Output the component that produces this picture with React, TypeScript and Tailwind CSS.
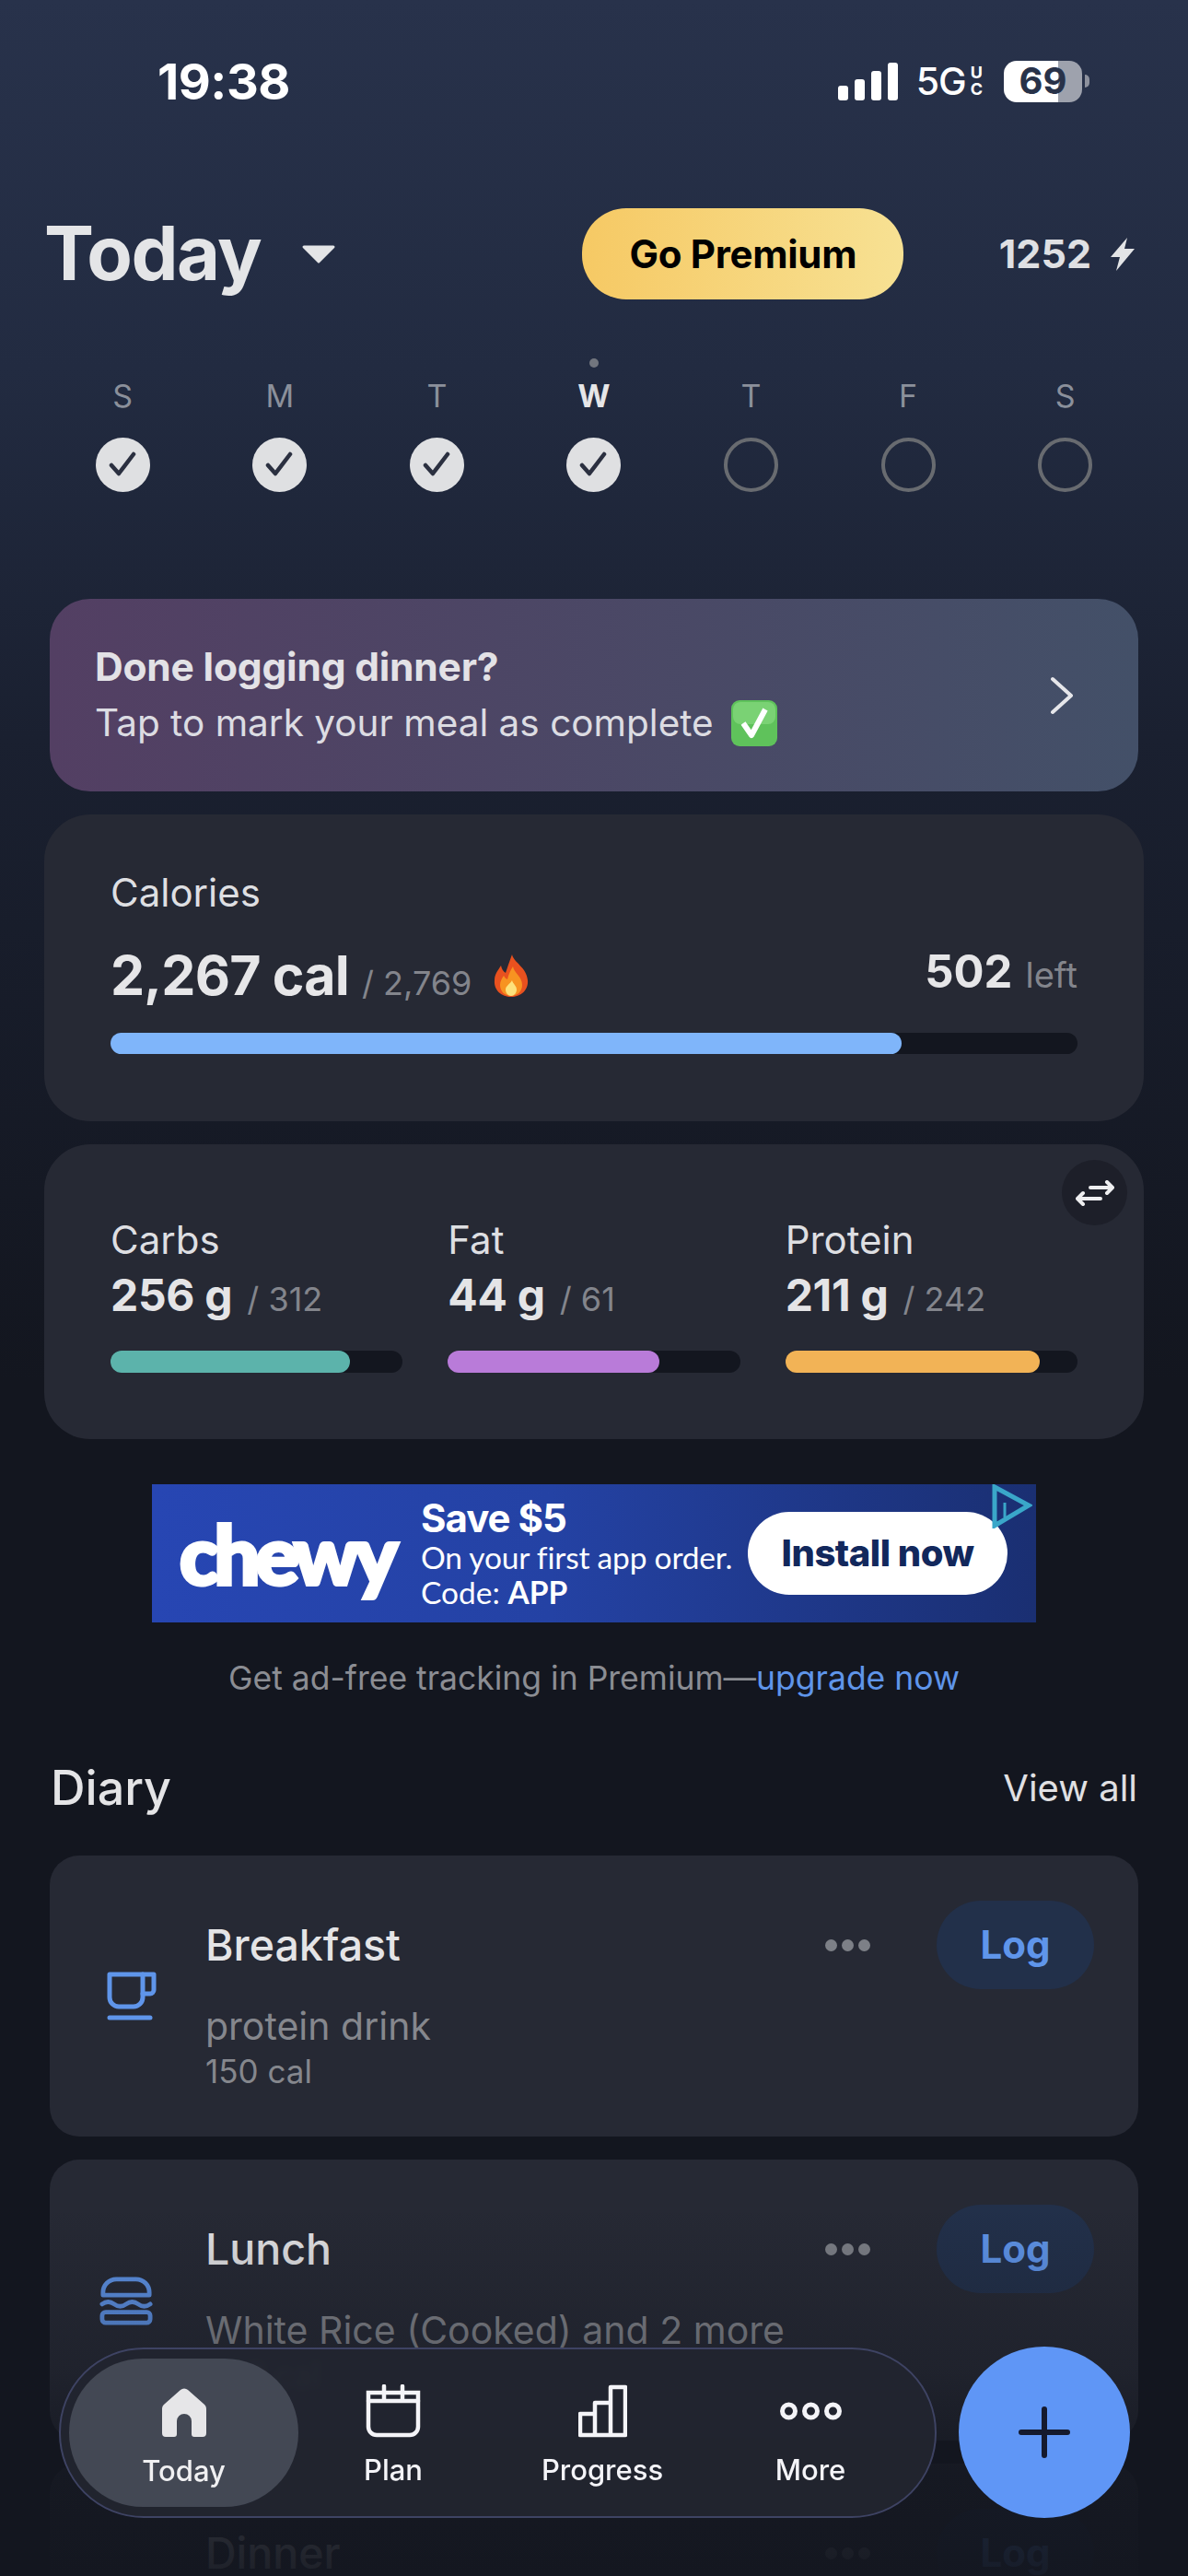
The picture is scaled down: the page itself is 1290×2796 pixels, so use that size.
const days = [
  { label: "S", done: true },
  { label: "M", done: true },
  { label: "T", done: true },
  { label: "W", done: true, today: true },
  { label: "T", done: false },
  { label: "F", done: false },
  { label: "S", done: false },
]

const macros = [
  { name: "Carbs", value: "256 g", goal: "/ 312", fill: "w-[260px]", color: "bg-[#5cb3ab]" },
  { name: "Fat", value: "44 g", goal: "/ 61", fill: "w-[230px]", color: "bg-[#b97bd9]" },
  { name: "Protein", value: "211 g", goal: "/ 242", fill: "w-[276px]", color: "bg-[#f2b356]" },
]

function DayCircle({ done }: { done: boolean }) {
  return (
    <svg width="59" height="59" viewBox="0 0 59 59" fill="none">
      {done ? (
        <>
          <circle cx="29.5" cy="29.5" r="29.5" fill="#dfe0e2" />
          <path d="M17 30l8 9 16-21" stroke="#2b3040" strokeWidth="4.500" strokeLinecap="round" strokeLinejoin="round" />
        </>
      ) : (
        <circle cx="29.5" cy="29.5" r="27.5" stroke="#686b70" strokeWidth="4" />
      )}
    </svg>
  )
}

function CheckEmoji() {
  return (
    <svg width="52" height="52" viewBox="0 0 52 52" fill="none" className="ml-[18px]">
      <rect x="1" y="1" width="50" height="50" rx="9" fill="#5fc25b" />
      <rect x="3" y="3" width="46" height="24" rx="8" fill="#7ad274" />
      <path d="M14 26l9 13 15-28" stroke="#fff" strokeWidth="6" strokeLinejoin="round" />
    </svg>
  )
}

function FlameEmoji() {
  return (
    <svg width="38" height="46" viewBox="0 0 38 46" className="ml-[24px] self-center">
      <path d="M20 0c2 9 16 14 17 28 1 11-8 18-18 18S0 39 1 28c0-7 4-11 7-16 1 4 2 6 5 8 2-6 4-12 7-20z" fill="#e8511f" />
      <path d="M21 13c1 7 10 11 10 20 0 7-5 12-12 12S7 40 7 33c0-4 2-7 4-10 1 2 2 3 4 4 1-5 3-9 6-14z" fill="#f79321" />
      <path d="M20 28c1 4 5 6 5 10 0 4-3 7-6 7s-6-3-6-7c0-4 5-6 7-10z" fill="#fde27c" />
    </svg>
  )
}

function CupIcon() {
  return (
    <svg width="54" height="54" viewBox="0 0 54 54" fill="none" stroke="#5f95ea" strokeWidth="5" strokeLinecap="round" strokeLinejoin="round">
      <path d="M3 3h36v25a10 10 0 0 1-10 10H13A10 10 0 0 1 3 28z" />
      <path d="M39 3h12v17a4 4 0 0 1-4 4h-8" />
      <path d="M3 50h44" />
    </svg>
  )
}

function BurgerIcon() {
  return (
    <svg width="60" height="54" viewBox="0 0 60 54" fill="none" stroke="#5f95ea" strokeWidth="5" strokeLinecap="round" strokeLinejoin="round" className="mr-[12px]">
      <path d="M4 21v-3A15 15 0 0 1 19 3h22a15 15 0 0 1 15 15v3z" />
      <path d="M3 31q6.750-5 13.500 0t13.500 0 13.500 0 13.500 0" />
      <rect x="3" y="40" width="54" height="12" rx="4" />
    </svg>
  )
}

function MealCard({
  title,
  desc,
  cal,
  icon,
}: {
  title: string
  desc?: string
  cal?: string
  icon: React.ReactNode
}) {
  return (
    <div className="mx-[54px] mb-[25px] flex h-[305px] shrink-0 items-center rounded-[32px] bg-[#262934] pl-[54px] pr-[48px]">
      <div className="flex w-[70px] justify-center">{icon}</div>
      <div className="ml-[45px] flex h-full flex-1 flex-col pt-[49px]">
        <div className="flex h-[96px] items-center">
          <span className="flex-1 text-[46.5px] font-medium leading-[48px] text-[#e4e4e6]">{title}</span>
          <div className="mr-[72px] flex gap-[5px]">
            <span className="h-[13px] w-[13px] rounded-full bg-[#7d8087]" />
            <span className="h-[13px] w-[13px] rounded-full bg-[#7d8087]" />
            <span className="h-[13px] w-[13px] rounded-full bg-[#7d8087]" />
          </div>
          <div className="flex h-[96px] w-[171px] items-center justify-center rounded-full bg-[#22304a] text-[42px] font-bold leading-[48px] text-[#5f95ea]">
            Log
          </div>
        </div>
        <div className="mt-[15px] text-[41px] leading-[50px] text-[#85878d]">{desc}</div>
        <div className="mt-[2px] text-[35px] leading-[44px] text-[#85878d]">{cal}</div>
      </div>
    </div>
  )
}

function BottomNav() {
  return (
    <div className="absolute bottom-[63px] left-[64px] right-[63px] z-20 flex items-center justify-between">
      <nav className="flex h-[185px] w-[953px] items-center rounded-[92px] border-2 border-[#3e4363] bg-[#22252f]/95 pl-[9px] backdrop-blur-[3px]">
        <div className="flex h-[161px] w-[249px] flex-col items-center rounded-[80px] bg-[#434854]">
          <svg width="50" height="54" viewBox="0 0 50 54" fill="#e6e6e8" className="mt-[32px]">
            <path d="M21 2a6 6 0 0 1 8 0l17 15a7 7 0 0 1 3 6v26a4 4 0 0 1-4 4h-9a3 3 0 0 1-3-3V36a8 8 0 0 0-16 0v14a3 3 0 0 1-3 3H5a4 4 0 0 1-4-4V23a7 7 0 0 1 3-6z" />
          </svg>
          <span className="mt-[16px] text-[31px] font-medium leading-[40px] text-[#f0f0f2]">Today</span>
        </div>
        <div className="flex w-[206px] flex-col items-center pt-[8px]">
          <svg width="60" height="58" viewBox="0 0 60 58" fill="none" stroke="#f4f4f8" strokeWidth="4.500" strokeLinecap="round">
            <path d="M3 9h54v37a9 9 0 0 1-9 9H12a9 9 0 0 1-9-9z" />
            <path d="M3 18h54" />
            <path d="M20 2v14M40 2v14" />
          </svg>
          <span className="mt-[15px] text-[31px] font-medium leading-[40px] text-[#f4f4f8]">Plan</span>
        </div>
        <div className="flex w-[248px] flex-col items-center pt-[8px]">
          <svg width="53" height="58" viewBox="0 0 53 58" fill="none" stroke="#f4f4f8" strokeWidth="4.500" strokeLinejoin="round">
            <path d="M35 3h16v52H35zM18 20h17v35H18zM2 32h16v23H2z" />
          </svg>
          <span className="mt-[15px] text-[31px] font-medium leading-[40px] text-[#f4f4f8]">Progress</span>
        </div>
        <div className="flex w-[204px] flex-col items-center pt-[8px]">
          <div className="flex h-[58px] items-center">
            <svg width="67" height="20" viewBox="0 0 67 20" fill="none" stroke="#f4f4f8" strokeWidth="5">
              <circle cx="9.500" cy="10" r="7" />
              <circle cx="33.500" cy="10" r="7" />
              <circle cx="57.500" cy="10" r="7" />
            </svg>
          </div>
          <span className="mt-[15px] text-[31px] font-medium leading-[40px] text-[#f4f4f8]">More</span>
        </div>
      </nav>
      <div className="flex h-[186px] w-[186px] items-center justify-center rounded-full bg-[#5f96f6]">
        <svg width="56" height="56" viewBox="0 0 56 56" fill="none" stroke="#151a2e" strokeWidth="6" strokeLinecap="round">
          <path d="M28 3v50M3 28h50" />
        </svg>
      </div>
    </div>
  )
}

export default function App() {
  return (
    <div className="relative flex h-[2796px] w-[1290px] flex-col overflow-hidden bg-[linear-gradient(180deg,#28324b_0px,#222b41_400px,#1a2030_800px,#13161f_1500px)] font-['Inter',sans-serif]">
      {/* status bar */}
      <div className="flex h-[176px] shrink-0 items-center justify-between pl-[171px] pr-[107px]">
        <span className="text-[54px] font-bold tracking-[-0.5px] text-white">19:38</span>
        <div className="flex items-center">
          <div className="flex h-[41px] items-end gap-[7px]">
            <span className="h-[16px] w-[11px] rounded-[3px] bg-white" />
            <span className="h-[23px] w-[11px] rounded-[3px] bg-white" />
            <span className="h-[32px] w-[11px] rounded-[3px] bg-white" />
            <span className="h-[41px] w-[11px] rounded-[3px] bg-white" />
          </div>
          <span className="ml-[20px] text-[41px] font-medium leading-none tracking-[-1px] text-white">5G</span>
          <div className="ml-[5px] flex flex-col items-center text-[18px] font-bold leading-[18px] text-white">
            <span>U</span>
            <span>C</span>
          </div>
          <div className="ml-[23px] flex h-[45px] w-[85px] items-center justify-center rounded-[14px] bg-[linear-gradient(90deg,#ffffff_69%,#9ea2ad_69%)] text-[40px] font-bold text-[#283249]">
            69
          </div>
          <span className="ml-[3px] h-[14px] w-[5px] rounded-r-full bg-[#8d919d]" />
        </div>
      </div>

      {/* header */}
      <div className="mt-[50px] flex h-[99px] shrink-0 items-center pl-[48px] pr-[58px]">
        <span className="text-[81px] font-bold tracking-[-1.500px] text-[#e4e5e7]">Today</span>
        <svg width="38" height="22" viewBox="0 0 38 22" className="ml-[44px]" fill="#e4e5e7" stroke="#e4e5e7" strokeWidth="3" strokeLinejoin="round">
          <path d="M3 3h32L19 19z" />
        </svg>
        <div className="ml-[267px] flex h-[99px] w-[349px] items-center justify-center rounded-[48px] bg-[linear-gradient(90deg,#f6c964,#f7e193)] text-[42px] font-bold tracking-[-0.3px] text-black">
          Go Premium
        </div>
        <span className="ml-auto text-[43px] font-bold text-[#dfe0e3]">1252</span>
        <svg width="26" height="36" viewBox="0 0 26 36" fill="#e3e4e6" className="ml-[21px]">
          <path d="M18 0L0 21h10L6 36l20-24H15z" />
        </svg>
      </div>

      {/* week strip */}
      <div className="mx-[48px] mt-[64px] grid shrink-0 grid-cols-7">
        {days.map((d, i) => (
          <div key={i} className="flex flex-col items-center">
            <span className={`h-[10px] w-[10px] rounded-full ${d.today ? "bg-[#72767e]" : ""}`} />
            <span className={`mt-[11px] text-[34px] leading-[40px] ${d.today ? "font-bold text-[#e6e6e8]" : "text-[#8b909b]"}`}>
              {d.label}
            </span>
            <div className="mt-[25px] flex">
              <DayCircle done={d.done} />
            </div>
          </div>
        ))}
      </div>

      {/* meal prompt */}
      <div className="mx-[54px] mt-[116px] flex h-[209px] shrink-0 items-center justify-between rounded-[44px] bg-[linear-gradient(90deg,#533f63,#435068)] pl-[49px] pr-[70px]">
        <div>
          <div className="text-[42.5px] font-bold leading-[50px] tracking-[-0.2px] text-[#e3e2e6]">Done logging dinner?</div>
          <div className="mt-[10px] flex items-center text-[40.5px] leading-[52px] text-[#dcdce2]">
            Tap to mark your meal as complete
            <CheckEmoji />
          </div>
        </div>
        <svg width="26" height="42" viewBox="0 0 26 42" fill="none" stroke="#e6e6ea" strokeWidth="4" strokeLinecap="round" strokeLinejoin="round">
          <path d="M3 3l20 18L3 39" />
        </svg>
      </div>

      {/* calories */}
      <div className="mx-[48px] mt-[25px] h-[333px] shrink-0 rounded-[50px] bg-[#262934] px-[72px] pt-[60px]">
        <div className="text-[42px] leading-[50px] text-[#dedfe2]">Calories</div>
        <div className="mt-[30px] flex h-[70px] items-end justify-between">
          <div className="flex items-baseline">
            <span className="text-[59px] font-bold leading-[70px] tracking-[-0.8px] text-[#e6e6e8]">2,267 cal</span>
            <span className="ml-[14px] text-[36px] text-[#83858c]">/ 2,769</span>
            <FlameEmoji />
          </div>
          <div className="mb-[3px] flex items-baseline">
            <span className="text-[49px] font-bold text-[#e6e6e8]">502</span>
            <span className="ml-[14px] text-[38px] text-[#83858c]">left</span>
          </div>
        </div>
        <div className="mt-[27px] h-[23px] rounded-full bg-[#13161f]">
          <div className="h-full w-[859px] rounded-full bg-[#7fb5fa]" />
        </div>
      </div>

      {/* macros */}
      <div className="relative mx-[48px] mt-[25px] h-[320px] shrink-0 rounded-[50px] bg-[#262934] px-[72px] pt-[79px]">
        <div className="absolute right-[18px] top-[17px] flex h-[71px] w-[71px] items-center justify-center rounded-full bg-[#1d1f29]">
          <svg width="42" height="28" viewBox="0 0 42 28" fill="none" stroke="#eeeef0" strokeWidth="4" strokeLinecap="round" strokeLinejoin="round">
            <path d="M16 8h24M34 2l6 6-6 6" />
            <path d="M27 20H2M8 14l-6 6 6 6" />
          </svg>
        </div>
        <div className="grid grid-cols-3 gap-[49px]">
          {macros.map((m) => (
            <div key={m.name}>
              <div className="text-[42px] leading-[50px] text-[#dedfe2]">{m.name}</div>
              <div className="mt-[5px] flex h-[60px] items-baseline">
                <span className="text-[48px] font-bold leading-[60px] tracking-[-0.3px] text-[#e4e4e6]">{m.value}</span>
                <span className="ml-[16px] text-[36px] text-[#83858c]">{m.goal}</span>
              </div>
              <div className="mt-[30px] h-[24px] rounded-full bg-[#13161f]">
                <div className={`h-full rounded-full ${m.fill} ${m.color}`} />
              </div>
            </div>
          ))}
        </div>
      </div>

      {/* ad */}
      <div className="relative mx-auto mt-[49px] flex h-[150px] w-[960px] shrink-0 items-center bg-[linear-gradient(90deg,#2746b3,#2442a4_45%,#1a2f72)] pl-[30px]">
        <span className="w-[262px] font-['Lato',sans-serif] text-[88px] font-black leading-none tracking-[-5px] text-white [-webkit-text-stroke:4px_white]">
          chewy
        </span>
        <div className="text-white">
          <div className="text-[42px] font-bold leading-[44px] tracking-[-1px]">Save $5</div>
          <div className="font-['Lato',sans-serif] text-[33.5px] leading-[40px] tracking-[-0.2px]">On your first app order.</div>
          <div className="font-['Lato',sans-serif] text-[33.5px] leading-[36px]">
            Code: <b>APP</b>
          </div>
        </div>
        <div className="absolute left-[647px] top-[30px] flex h-[90px] w-[282px] items-center justify-center rounded-full bg-white text-[40px] font-extrabold tracking-[-0.5px] text-[#12285c]">
          Install now
        </div>
        <svg width="44" height="48" viewBox="0 0 44 48" fill="none" stroke="#3aa7c9" strokeWidth="5" className="absolute right-[4px] top-0">
          <path d="M3 3l37 20L3 45z" />
          <path d="M14 20v16" strokeWidth="3" />
        </svg>
      </div>

      <div className="mt-[39px] shrink-0 text-center text-[35.5px] leading-[44px] text-[#8b8d93]">
        Get ad-free tracking in Premium—<span className="text-[#5f95ea]">upgrade now</span>
      </div>

      {/* diary */}
      <div className="mx-[55px] mt-[67px] flex h-[60px] shrink-0 items-center justify-between">
        <span className="text-[52px] font-medium text-[#e4e4e6]">Diary</span>
        <span className="text-[40px] text-[#e0e0e3]">View all</span>
      </div>
      <div className="mt-[43px] flex shrink-0 flex-col">
        <MealCard title="Breakfast" desc="protein drink" cal="150 cal" icon={<CupIcon />} />
        <MealCard title="Lunch" desc="White Rice (Cooked) and 2 more" cal="900 cal" icon={<BurgerIcon />} />
        <MealCard title="Dinner" icon={<CupIcon />} />
      </div>

      {/* fade behind the tab bar */}
      <div className="absolute inset-x-0 bottom-0 z-10 h-[400px] bg-[linear-gradient(180deg,rgba(19,22,31,0),rgba(19,22,31,0.35)_45%,rgba(19,22,31,0.85)_72%,rgba(19,22,31,0.95)_100%)]" />

      <BottomNav />
    </div>
  )
}
